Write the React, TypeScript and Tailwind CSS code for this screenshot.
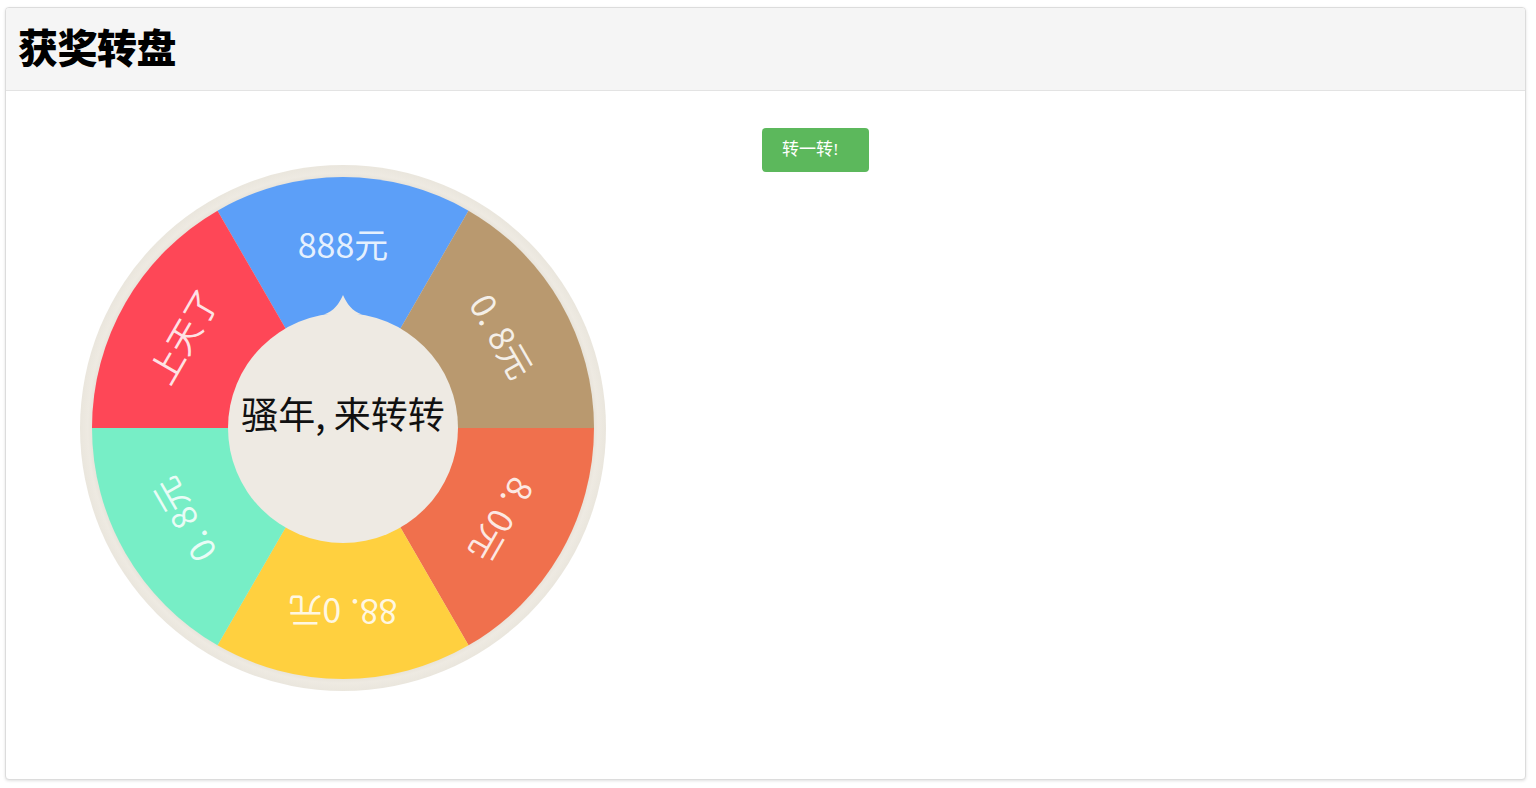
import React from "react";

const prizes = [
  { label: ["888元"], color: "#5c9ff8" },
  { label: ["0.", "8元"], color: "#b9996f" },
  { label: ["8.", "0元"], color: "#f0704d" },
  { label: ["88.", "0元"], color: "#ffd03f" },
  { label: ["0.", "8元"], color: "#77eec6" },
  { label: ["上天了"], color: "#fe4757" },
];

const C = 263;
const R = 251;

const pt = (deg: number, r: number) => {
  const a = (deg * Math.PI) / 180;
  return `${(C + r * Math.sin(a)).toFixed(2)},${(C - r * Math.cos(a)).toFixed(2)}`;
};

const Wheel = () => (
  <svg width="526" height="526" viewBox="0 0 526 526" className="block">
    <defs>
      <radialGradient id="ring" cx="50%" cy="50%" r="50%">
        <stop offset="94%" stopColor="#e4dfd5" />
        <stop offset="97%" stopColor="#eeeae2" />
        <stop offset="100%" stopColor="#eae6dd" />
      </radialGradient>
    </defs>
    <circle cx={C} cy={C} r={263} fill="url(#ring)" />
    {prizes.map((p, i) => {
      const start = i * 60 - 30;
      const end = start + 60;
      return (
        <path
          key={i}
          d={`M${C},${C} L${pt(start, R)} A${R},${R} 0 0 1 ${pt(end, R)} Z`}
          fill={p.color}
        />
      );
    })}
    {prizes.map((p, i) => (
      <text
        key={i}
        x={C}
        y={C - 185}
        transform={`rotate(${i * 60} ${C} ${C})`}
        textAnchor="middle"
        dominantBaseline="central"
        fill="#ffffff"
        fillOpacity={0.85}
        fontSize={34}
        fontFamily='"Noto Sans CJK SC", sans-serif'
      >
        {p.label[0]}
        {p.label[1] && <tspan dx={9}>{p.label[1]}</tspan>}
      </text>
    ))}
    <circle cx={C} cy={C} r={115} fill="#eeeae3" />
    <path
      d={`M${C - 19},${C - 113.4} C${C - 9},${C - 117} ${C - 4},${C - 124} ${C},${C - 133} C${C + 4},${C - 124} ${C + 9},${C - 117} ${C + 19},${C - 113.4} Z`}
      fill="#eeeae3"
    />
    <text
      x={C}
      y={C - 15}
      textAnchor="middle"
      dominantBaseline="central"
      fill="#111111"
      fontSize={37}
      fontFamily='"Noto Sans CJK SC", sans-serif'
    >
      骚年, 来转转
    </text>
  </svg>
);

export default function App() {
  return (
    <div className="min-h-[788px] bg-white pt-[7px] pl-[5px] pr-[10px]">
      <div className="h-[773px] rounded border border-[#dcdcdc] bg-white shadow-[0_1px_3px_rgba(0,0,0,0.12)] overflow-hidden">
        <div className="h-[83px] bg-[#f5f5f5] border-b border-[#e3e3e3] flex items-center px-[12px] pb-[7px]">
          <h1
            className="text-[40px] font-black text-black leading-none tracking-[-0.5px]"
            style={{ fontFamily: '"Noto Sans CJK SC", sans-serif' }}
          >
            获奖转盘
          </h1>
        </div>
        <div className="flex items-start pl-[74px]">
          <div className="mt-[74px]">
            <Wheel />
          </div>
          <button
            className="ml-[156px] mt-[37px] h-[44px] w-[107px] rounded bg-[#5cb85c] text-white text-[17px] pl-[20px] text-left"
            style={{ fontFamily: '"Liberation Serif", "Noto Sans CJK SC", serif' }}
          >
            转一转!
          </button>
        </div>
      </div>
    </div>
  );
}
